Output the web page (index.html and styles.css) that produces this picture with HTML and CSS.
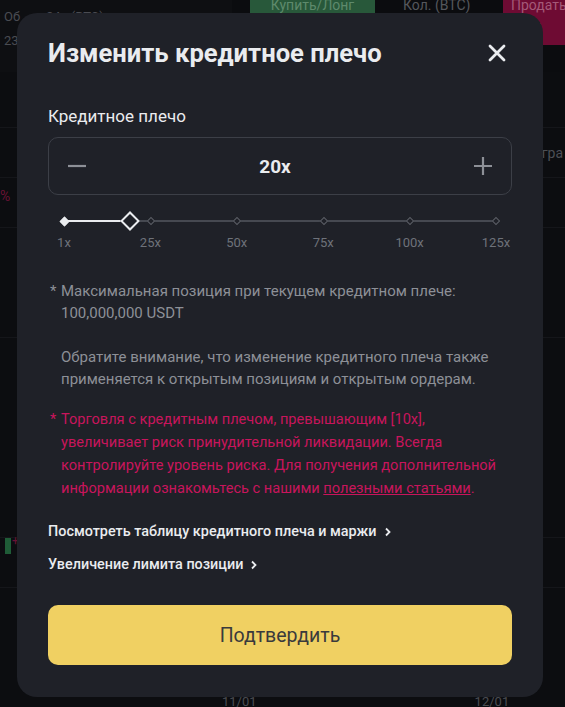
FILE: index.html
```html
<!DOCTYPE html>
<html lang="ru">
<head>
<meta charset="utf-8">
<link rel="stylesheet" href="styles.css">
</head>
<body>
<div class="page">
  <div class="bg">
    <div class="bg-top">
      <div class="bg-left">
        <div class="bg-stat">Об&nbsp;&nbsp;&nbsp;&nbsp;&nbsp;&nbsp;&nbsp;&nbsp;24ч (BTC)</div>
        <div class="bg-stat2">23</div>
      </div>
      <div class="bg-buy">Купить/Лонг</div>
      <div class="bg-qty">Кол. (BTC)</div>
      <div class="bg-sell"><span class="bg-sell-t">Продать</span><span>9536</span></div>
    </div>
    <div class="bg-row r1"></div>
    <div class="bg-row r2"><span class="bg-right">гра</span></div>
    <div class="bg-row r3"><span class="bg-pct">%</span></div>
    <div class="bg-row r4"></div>
    <div class="bg-row r5"></div>
    <div class="bg-row r6"><span class="candle"></span><span class="bg-plus">+</span></div>
    <div class="bg-spacer"></div>
    <div class="bg-dates"><span>11/01</span><span>12/01</span></div>
  </div>

  <div class="overlay">
    <div class="modal">
      <div class="head">
        <h1 class="title">Изменить кредитное плечо</h1>
        <svg class="close" width="20" height="20" viewBox="0 0 20 20"><path d="M3 3 L17 17 M17 3 L3 17" stroke="#eaecef" stroke-width="2.8" stroke-linecap="round"/></svg>
      </div>

      <div class="label">Кредитное плечо</div>
      <div class="stepper">
        <svg class="step-btn" width="20" height="20" viewBox="0 0 20 20"><path d="M1 10 H19" stroke="#8d9097" stroke-width="2.2"/></svg>
        <div class="value">20x</div>
        <svg class="step-btn" width="20" height="20" viewBox="0 0 20 20"><path d="M1 10 H19 M10 1 V19" stroke="#8d9097" stroke-width="2.2"/></svg>
      </div>

      <div class="slider">
        <div class="track">
          <div class="track-fill" style="width:15.3%"></div>
          <div class="dots">
            <span class="dot on"></span><span class="dot"></span><span class="dot"></span><span class="dot"></span><span class="dot"></span><span class="dot"></span>
          </div>
          <span class="thumb" style="left:15.3%"></span>
        </div>
        <div class="marks">
          <span>1x</span><span>25x</span><span>50x</span><span>75x</span><span>100x</span><span>125x</span>
        </div>
      </div>

      <div class="note">
        <span class="star">*</span>
        <p>Максимальная позиция при текущем кредитном плече:<br>100,000,000 USDT</p>
      </div>
      <div class="note plain">
        <span class="star"></span>
        <p>Обратите внимание, что изменение кредитного плеча также применяется к открытым позициям и открытым ордерам.</p>
      </div>
      <div class="note warn">
        <span class="star">*</span>
        <p>Торговля с кредитным плечом, превышающим [10x], увеличивает риск принудительной ликвидации. Всегда контролируйте уровень риска. Для получения дополнительной информации ознакомьтесь с нашими <a href="#">полезными статьями</a>.</p>
      </div>

      <div class="links">
        <a class="more" href="#">Посмотреть таблицу кредитного плеча и маржи <svg width="8" height="10" viewBox="0 0 8 10"><path d="M2 1.5 L5.5 5 L2 8.5" fill="none" stroke="#eaecef" stroke-width="1.8"/></svg></a>
        <a class="more" href="#">Увеличение лимита позиции <svg width="8" height="10" viewBox="0 0 8 10"><path d="M2 1.5 L5.5 5 L2 8.5" fill="none" stroke="#eaecef" stroke-width="1.8"/></svg></a>
      </div>

      <button class="confirm">Подтвердить</button>
    </div>
  </div>
</div>
</body>
</html>
```

FILE: styles.css
```css
* { box-sizing: border-box; }
html, body { margin: 0; padding: 0; }
body {
  width: 565px;
  height: 707px;
  overflow: hidden;
  background: #0c0d10;
  font-family: Roboto, "Noto Sans", "Liberation Sans", sans-serif;
}
.page { position: relative; width: 565px; height: 707px; }

/* faded trading screen behind the modal */
.bg { display: flex; flex-direction: column; height: 100%; color: #4a4c52; font-size: 14px; }
.bg-top { display: flex; height: 72px; background: #0b0c0f; }
.bg-left { width: 232px; padding: 9px 0 0 4px; background: #0e0f12; font-size: 13px; line-height: 16px; }
.bg-stat2 { margin-top: 8px; }
.bg-buy { margin-left: 18px; width: 125px; height: 13px; background: #28583a; color: #5e8a6c; font-size: 14px; line-height: 10px; text-align: center; overflow: hidden; }
.bg-qty { margin-left: 28px; width: 70px; line-height: 10px; height: 13px; overflow: hidden; color: #55575c; }
.bg-sell { margin-left: 30px; flex: 1; height: 45px; background: #6e0b33; color: #a45978; padding-left: 8px; display: flex; flex-direction: column; overflow: hidden; }
.bg-sell-t { line-height: 10px; height: 13px; overflow: hidden; }
.bg-sell span:last-child { margin-top: 8px; line-height: 16px; }
.bg-row { height: 50px; border-bottom: 1px solid #15161a; position: relative; }
.r1 { height: 56px; }
.r4 { height: 110px; }
.r5 { height: 200px; }
.bg-right { position: absolute; right: 2px; top: 17px; color: #4d4f55; font-size: 14px; }
.bg-pct { position: absolute; left: 0; top: 10px; color: #6a1235; font-size: 14px; }
.candle { position: absolute; left: 5px; top: 0; width: 6px; height: 16px; background: #1f5c37; }
.bg-plus { position: absolute; left: 12px; top: -4px; color: #6a1235; font-size: 12px; }
.bg-spacer { flex: 1; }
.bg-dates { height: 14px; display: flex; gap: 218px; padding-left: 222px; font-size: 13px; color: #4a4c52; line-height: 12px; overflow: hidden; padding-top: 3px; }

/* modal */
.overlay { position: absolute; inset: 0; }
.modal {
  position: absolute;
  left: 17px;
  top: 13px;
  width: 526px;
  height: 684px;
  background: #1f2128;
  border-radius: 20px;
  padding: 0 31px;
  display: flex;
  flex-direction: column;
  color: #eaecef;
}
.head { display: flex; align-items: center; justify-content: space-between; height: 78px; padding-top: 1px; }
.title { margin: 0; font-size: 25.6px; font-weight: 700; color: #eaecef; letter-spacing: 0; }
.close { margin-right: 5px; }

.label { margin-top: 15px; font-size: 17px; line-height: 20px; color: #eaecef; }
.stepper {
  margin-top: 11px;
  height: 58px;
  border: 1px solid #3c3f47;
  border-radius: 10px;
  display: flex;
  align-items: center;
  justify-content: space-between;
  padding: 0 18px;
  flex: none;
}
.value { font-size: 19px; font-weight: 700; color: #eaecef; margin-right: 10px; }

.slider { margin-top: 20px; }
.track { position: relative; height: 12px; margin: 0 16px; }
.track::before { content: ""; position: absolute; left: 0; right: 0; top: 5px; height: 1.5px; background: #464951; }
.track-fill { position: absolute; left: 0; top: 5px; height: 2px; background: #eaecef; }
.dots { position: relative; display: flex; justify-content: space-between; height: 12px; align-items: center; margin: 0 -3px; }
.dot { width: 6px; height: 6px; transform: rotate(45deg); border: 1.2px solid #5b5e66; background: #1f2128; }
.dot.on { background: #eaecef; border-color: #eaecef; width: 7px; height: 7px; }
.thumb {
  position: absolute; top: 6px; width: 14px; height: 14px; margin-left: -7px; margin-top: -7px;
  transform: rotate(45deg); border: 2px solid #eaecef; background: #1f2128;
}
.marks { display: flex; justify-content: space-between; margin-top: 8px; }
.marks span { width: 32px; text-align: center; font-size: 13px; color: #6e727a; line-height: 16px; }

.note { display: flex; margin-top: 29px; font-size: 15px; line-height: 22px; color: #8d9097; }
.note.plain { margin-top: 22px; }
.star { width: 13px; flex: none; padding-left: 2px; }
.note p { margin: 0; }
.note.warn { color: #c8155c; margin-top: 18px; line-height: 23px; font-size: 14.6px; }
.note.warn a { color: #c8155c; text-decoration: underline; }

.links { margin-top: 22px; display: flex; flex-direction: column; gap: 13px; }
.more { color: #eaecef; text-decoration: none; font-size: 14.4px; font-weight: 500; line-height: 20px; display: flex; align-items: center; gap: 7px; }

.confirm {
  margin-top: 30px;
  height: 60px;
  flex: none;
  border: none;
  border-radius: 10px;
  background: #f0d062;
  color: #3a3a3c;
  font-family: Roboto, "Noto Sans", "Liberation Sans", sans-serif;
  font-size: 19.5px;
}
```
